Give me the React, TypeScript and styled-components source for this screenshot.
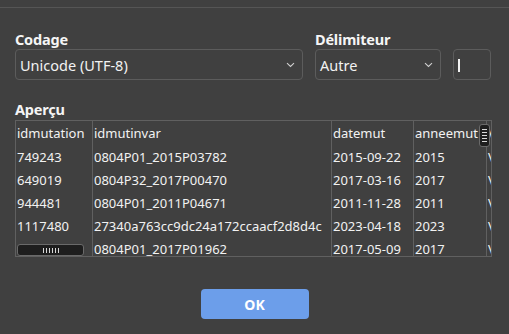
import React from 'react';
import styled, { createGlobalStyle } from 'styled-components';

const GlobalStyle = createGlobalStyle`
  html, body {
    margin: 0;
    padding: 0;
    background: #404040;
  }
  body {
    font-family: 'Noto Sans', 'Open Sans', sans-serif;
    color: #f2f2f2;
  }
`;

const columns = ['idmutation', 'idmutinvar', 'datemut', 'anneemut', 'V'];

const rows = [
  ['749243', '0804P01_2015P03782', '2015-09-22', '2015', 'V'],
  ['649019', '0804P32_2017P00470', '2017-03-16', '2017', 'V'],
  ['944481', '0804P01_2011P04671', '2011-11-28', '2011', 'V'],
  ['1117480', '27340a763cc9dc24a172ccaacf2d8d4c', '2023-04-18', '2023', 'V'],
  ['', '0804P01_2017P01962', '2017-05-09', '2017', 'V'],
];

const ChevronDown = () => (
  <svg width="9" height="6" viewBox="0 0 9 6">
    <path d="M1 1.2 L4.5 4.5 L8 1.2" fill="none" stroke="#cfcfcf" strokeWidth="1.1" />
  </svg>
);

const App = (): JSX.Element => {
  return (
    <>
      <GlobalStyle />
      <Dialog>
        <TopRule />
        <FieldsRow>
          <Field>
            <Label>Codage</Label>
            <Select>
              <span>Unicode (UTF-8)</span>
              <ChevronDown />
            </Select>
          </Field>
          <Field>
            <Label>Délimiteur</Label>
            <Select>
              <span>Autre</span>
              <ChevronDown />
            </Select>
          </Field>
          <Field>
            <Label>&nbsp;</Label>
            <TextInput>
              <Caret />
            </TextInput>
          </Field>
        </FieldsRow>

        <PreviewSection>
          <Label>Aperçu</Label>
          <Preview>
            <Row>
              {columns.map((c) => (
                <Cell key={c}>{c}</Cell>
              ))}
            </Row>
            {rows.map((r, i) => (
              <Row key={i}>
                {r.map((v, j) => (
                  <Cell key={j}>{v}</Cell>
                ))}
              </Row>
            ))}
            <VScrollThumb>
              {[0, 1, 2, 3, 4].map((n) => (
                <i key={n} />
              ))}
            </VScrollThumb>
            <HScrollThumb>
              {[0, 1, 2, 3, 4, 5].map((n) => (
                <i key={n} />
              ))}
            </HScrollThumb>
          </Preview>
        </PreviewSection>

        <Footer>
          <OkButton>OK</OkButton>
        </Footer>
      </Dialog>
    </>
  );
};

export default App;

const Dialog = styled.div`
  width: 509px;
  height: 334px;
  overflow: hidden;
  background: #404040;
`;

const TopRule = styled.div`
  margin-top: 7px;
  height: 1px;
  background: #555555;
`;

const FieldsRow = styled.div`
  display: grid;
  grid-template-columns: 288px 126px 38px;
  column-gap: 12px;
  padding: 22px 0 0 15px;
`;

const Field = styled.div`
  display: flex;
  flex-direction: column;
`;

const Label = styled.div`
  font-size: 14.5px;
  font-weight: 700;
  line-height: 18px;
  height: 18px;
  color: #f5f5f5;
  letter-spacing: -0.2px;
`;

const Select = styled.div`
  box-sizing: border-box;
  height: 31px;
  margin-top: 1px;
  border: 1px solid #5c5c5c;
  border-radius: 4px;
  display: flex;
  align-items: center;
  justify-content: space-between;
  padding: 0 7px 0 4px;
  font-size: 14.5px;
  color: #f2f2f2;
  svg {
    margin-top: 1px;
  }
`;

const TextInput = styled(Select)`
  justify-content: flex-start;
  padding-left: 4px;
`;

const Caret = styled.span`
  display: block;
  width: 2px;
  height: 13px;
  margin-top: 2px;
  background: #f2f2f2;
`;

const PreviewSection = styled.div`
  padding: 20px 17px 0 15px;
`;

const Preview = styled.div`
  position: relative;
  box-sizing: border-box;
  margin-top: 2px;
  height: 137px;
  border: 1px solid #606060;
  overflow: hidden;
`;

const Row = styled.div`
  display: grid;
  grid-template-columns: 77px 239px 82px 73px 4px;
  height: 23px;
  &:first-child {
    height: 24px;
  }
`;

const Cell = styled.div`
  box-sizing: border-box;
  border-right: 1px solid #606060;
  padding-left: 1px;
  display: flex;
  align-items: center;
  font-size: 13px;
  color: #f2f2f2;
  white-space: nowrap;
  overflow: hidden;
  &:last-child {
    border-right: none;
  }
`;

const VScrollThumb = styled.div`
  position: absolute;
  top: 3px;
  right: 1px;
  width: 11px;
  height: 23px;
  box-sizing: border-box;
  background: #1e1e1e;
  border: 1px solid #6a6a6a;
  border-radius: 3px;
  display: flex;
  flex-direction: column;
  align-items: center;
  justify-content: center;
  gap: 2px;
  i {
    display: block;
    width: 5px;
    height: 1px;
    background: #d8d8d8;
  }
`;

const HScrollThumb = styled.div`
  position: absolute;
  left: 1px;
  bottom: 0px;
  width: 67px;
  height: 12px;
  box-sizing: border-box;
  background: #1e1e1e;
  border: 1px solid #6a6a6a;
  border-radius: 3px;
  display: flex;
  align-items: center;
  justify-content: center;
  gap: 2px;
  i {
    display: block;
    width: 1px;
    height: 5px;
    background: #d8d8d8;
  }
`;

const Footer = styled.div`
  display: flex;
  justify-content: center;
  padding-top: 32px;
`;

const OkButton = styled.button`
  width: 108px;
  height: 30px;
  border: none;
  border-radius: 4px;
  background: #6c9eea;
  color: #ffffff;
  font-family: 'Noto Sans', 'Open Sans', sans-serif;
  font-size: 14px;
  font-weight: 700;
  cursor: pointer;
`;
